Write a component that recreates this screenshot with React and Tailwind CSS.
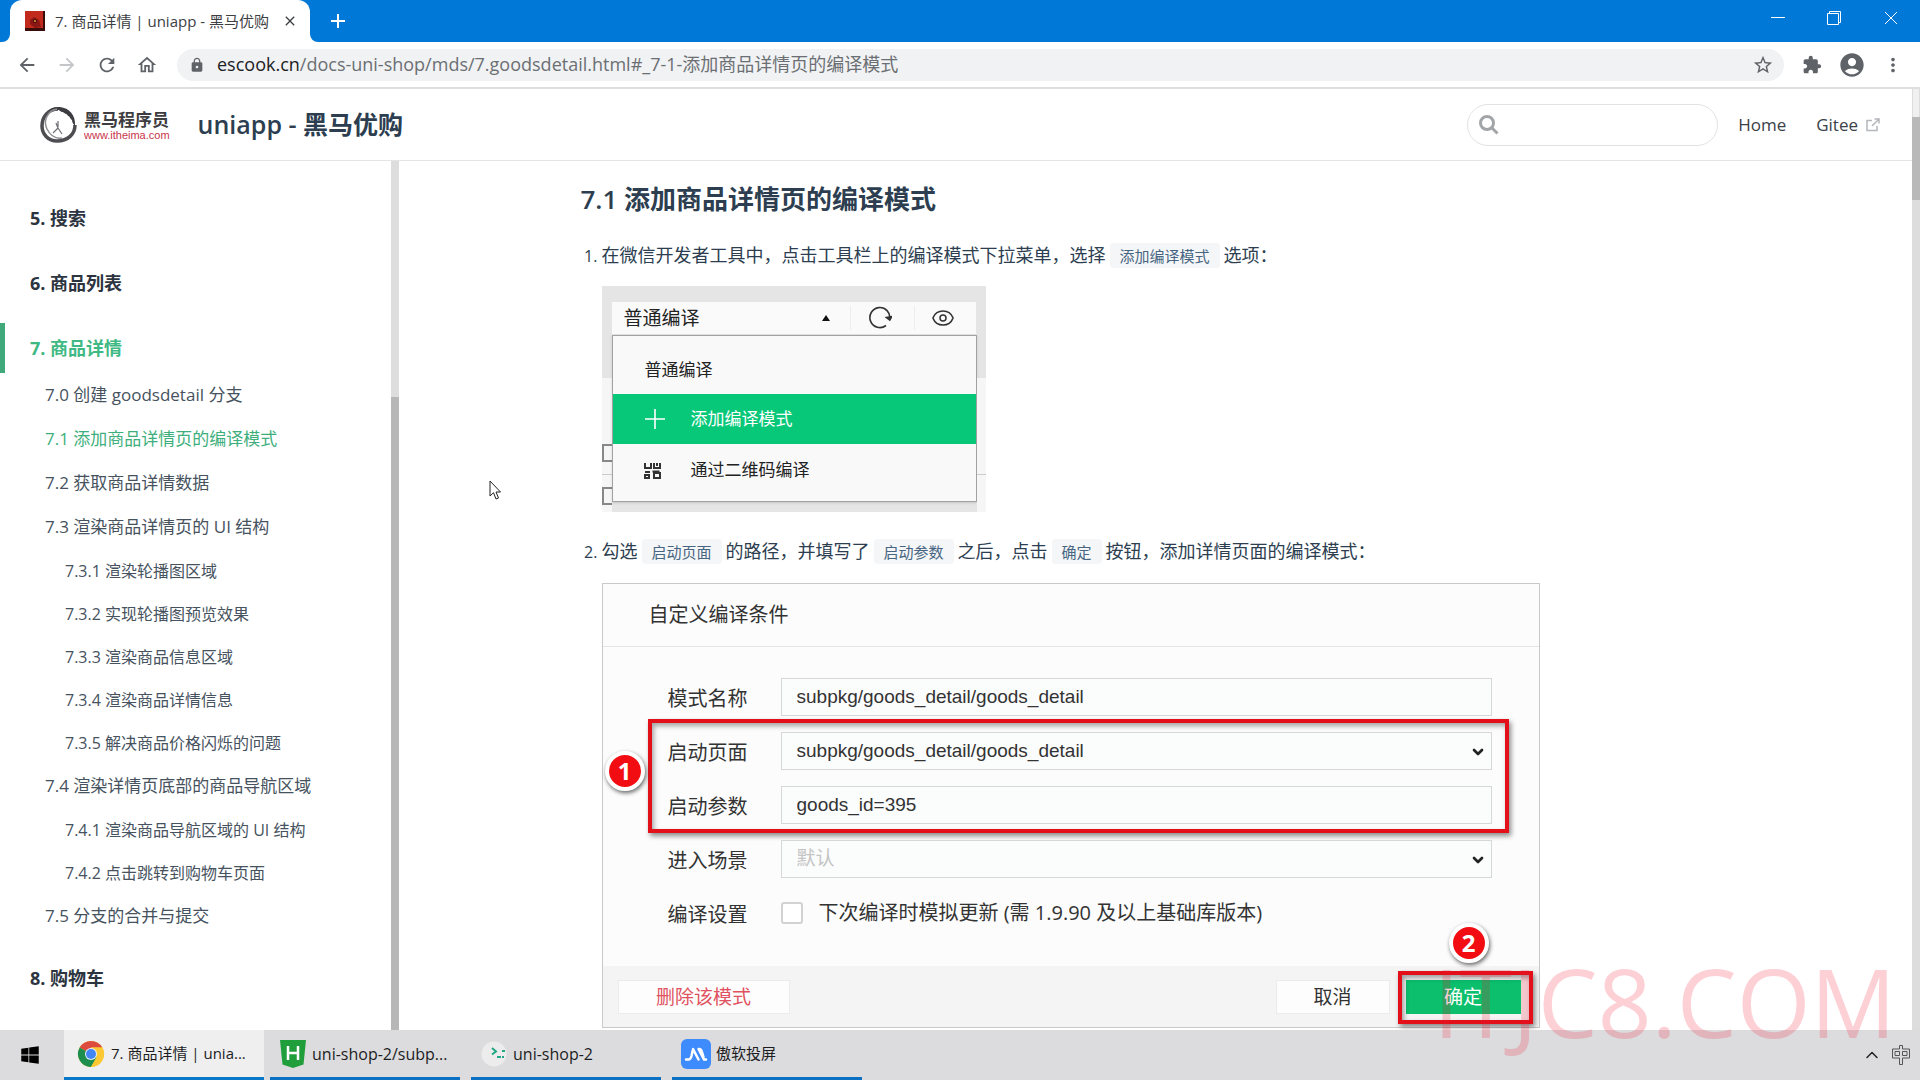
import React, { useState } from "react";
import {
  MdArrowBack,
  MdArrowForward,
  MdRefresh,
  MdOutlineHome,
  MdLock,
  MdStarBorder,
  MdExtension,
  MdAccountCircle,
  MdMoreVert,
  MdClose,
  MdAdd,
} from "react-icons/md";
import { FaWindows } from "react-icons/fa";
import { ChevronDown, ChevronUp, Eye } from "lucide-react";

const sidebar = [
  { title: "5. 搜索" },
  { title: "6. 商品列表" },
  {
    title: "7. 商品详情",
    active: true,
    children: [
      { title: "7.0 创建 goodsdetail 分支" },
      { title: "7.1 添加商品详情页的编译模式", active: true },
      { title: "7.2 获取商品详情数据" },
      {
        title: "7.3 渲染商品详情页的 UI 结构",
        children: [
          "7.3.1 渲染轮播图区域",
          "7.3.2 实现轮播图预览效果",
          "7.3.3 渲染商品信息区域",
          "7.3.4 渲染商品详情信息",
          "7.3.5 解决商品价格闪烁的问题",
        ],
      },
      {
        title: "7.4 渲染详情页底部的商品导航区域",
        children: ["7.4.1 渲染商品导航区域的 UI 结构", "7.4.2 点击跳转到购物车页面"],
      },
      { title: "7.5 分支的合并与提交" },
    ],
  },
  { title: "8. 购物车" },
];

const TabBar = () => (
  <div className="flex h-[42px] shrink-0 justify-between bg-[#0078d7] pl-[10px]">
    <div className="flex">
      <div className="relative flex w-[300px] items-center rounded-t-xl bg-white pl-[15px]">
        <svg viewBox="0 0 20 20" className="h-5 w-5 shrink-0">
          <rect width="20" height="20" fill="#3a0d0b" />
          <rect width="18" height="17" fill="#c12a1c" />
          <path d="M5 9l4-3 5 3 2 7-6 1-5-4z" fill="#8a1712" />
          <circle cx="10" cy="10" r="2" fill="#4a0d0b" />
          <circle cx="10" cy="10" r="1" fill="#e9a13b" />
        </svg>
        <span className="ml-[10px] whitespace-nowrap text-[15px] text-[#3c4043]">
          7. 商品详情 | uniapp - 黑马优购
        </span>
        <button aria-label="关闭标签页" className="absolute right-3">
          <MdClose className="h-4 w-4 text-[#3c4043]" />
        </button>
        <svg viewBox="0 0 8 8" className="absolute bottom-0 -left-2 h-2 w-2">
          <path d="M8 0v8H0a8 8 0 0 0 8-8z" fill="#fff" />
        </svg>
        <svg viewBox="0 0 8 8" className="absolute -right-2 bottom-0 h-2 w-2">
          <path d="M0 0v8h8a8 8 0 0 1-8-8z" fill="#fff" />
        </svg>
      </div>
      <button aria-label="新标签页" className="ml-4 flex items-center text-white">
        <MdAdd className="h-6 w-6" />
      </button>
    </div>
    <div className="flex h-9 items-center text-white">
      <button aria-label="最小化" className="flex w-14 justify-center">
        <svg viewBox="0 0 14 14" className="h-[14px] w-[14px]" stroke="currentColor">
          <path d="M0 6.5h14" />
        </svg>
      </button>
      <button aria-label="还原" className="flex w-14 justify-center">
        <svg viewBox="0 0 14 14" className="h-[14px] w-[14px]" stroke="currentColor" fill="none">
          <path d="M.5 2.500h11v11H.5zM2.500 2.500v-2h11v11h-2" />
        </svg>
      </button>
      <button aria-label="关闭" className="flex w-[58px] justify-center">
        <svg viewBox="0 0 14 14" className="h-[14px] w-[14px]" stroke="currentColor">
          <path d="M1 1l12 12M13 1L1 13" />
        </svg>
      </button>
    </div>
  </div>
);

const Toolbar = () => (
  <div className="flex h-[47px] shrink-0 items-center border-b-2 border-[#dedee1] bg-white pr-4 pl-4 text-[#5f6368]">
    <button aria-label="后退">
      <MdArrowBack className="h-[22px] w-[22px]" />
    </button>
    <button aria-label="前进" className="ml-[18px]">
      <MdArrowForward className="h-[22px] w-[22px] text-[#c4c6c9]" />
    </button>
    <button aria-label="重新加载" className="ml-[18px]">
      <MdRefresh className="h-[22px] w-[22px]" />
    </button>
    <button aria-label="主页" className="ml-[18px]">
      <MdOutlineHome className="h-[22px] w-[22px]" />
    </button>
    <div className="ml-[19px] flex h-8 flex-1 items-center rounded-full bg-[#f1f2f3] pr-[10px] pl-3">
      <MdLock className="h-4 w-4 shrink-0" />
      <span className="ml-3 flex-1 whitespace-nowrap text-[18px] text-[#6b6f73]">
        <span className="text-[#202124]">escook.cn</span>
        /docs-uni-shop/mds/7.goodsdetail.html#_7-1-添加商品详情页的编译模式
      </span>
      <button aria-label="收藏">
        <MdStarBorder className="h-[22px] w-[22px]" />
      </button>
    </div>
    <button aria-label="扩展程序" className="ml-[18px]">
      <MdExtension className="h-5 w-5" />
    </button>
    <button aria-label="用户" className="ml-4">
      <MdAccountCircle className="h-7 w-7" />
    </button>
    <button aria-label="更多" className="ml-4">
      <MdMoreVert className="h-[22px] w-[22px]" />
    </button>
  </div>
);

const Logo = () => (
  <div className="flex items-center">
    <svg viewBox="0 0 42 40" className="h-10 w-[42px]" fill="none">
      <path d="M20 4C10 4 4 12 4 21c0 8 6 15 15 15 11 0 18-7 18-16" stroke="#4d4d52" strokeWidth="3.500" />
      <path d="M37 21C38 10 31 3 22 2c-5-.5-9 1-12 4 4-2 8-2 10-1 2 0 2 2 5 2 1 2 4 1 5 4 2 0 2 3 4 4 0 2 1 4 3 6z" fill="#3d3d41" />
      <path d="M19 4C9 6 5 16 9 24c3 6 8 10 15 9" stroke="#8e8e93" strokeWidth="1.500" />
      <path d="M18 18l2 5-5 5M20 23l4 6M20 16v6" stroke="#6d6d73" strokeWidth="1.200" />
    </svg>
    <div className="ml-1">
      <p className="text-[17px] leading-[19px] font-bold text-[#3d3d41]">黑马程序员</p>
      <p className="font-['Liberation_Sans',sans-serif] text-[11px] leading-[12px] text-[#c9344a]">
        www.itheima.com
      </p>
    </div>
  </div>
);

const SiteHeader = () => (
  <header className="flex h-[72px] shrink-0 items-center justify-between border-b border-[#e3e5e8] pt-px pr-8 pl-[38px]">
    <div className="flex items-center">
      <Logo />
      <a href="#home" className="ml-7 text-[25px] font-semibold text-[#2c3e50]">
        uniapp - 黑马优购
      </a>
    </div>
    <nav className="flex items-center text-[17px] font-medium text-[#3a4149]">
      <div className="relative">
        <svg viewBox="0 0 20 20" className="absolute top-[11px] left-3 h-5 w-5" fill="none" stroke="#a2a5a8" strokeWidth="3">
          <circle cx="8" cy="8" r="6.500" />
          <path d="M12.500 12.500l6 6" />
        </svg>
        <input
          type="text"
          aria-label="搜索"
          className="h-[42px] w-[251px] rounded-full border border-[#e0e3e6] bg-white pr-4 pl-10 outline-none"
        />
      </div>
      <a href="#home" className="ml-5">
        Home
      </a>
      <a href="#gitee" className="ml-[30px] flex items-center">
        Gitee
        <svg viewBox="0 0 14 14" className="ml-2 h-[14px] w-[14px]" fill="none" stroke="#b4b7ba" strokeWidth="1.500">
          <path d="M6 2.500H1v10h10V8M8.500 1h4.500v4.500M13 1L6 8" />
        </svg>
      </a>
    </nav>
  </header>
);

const Sidebar = () => (
  <aside className="flex w-[399px] shrink-0">
    <ul className="min-w-0 flex-1 space-y-[15px] overflow-hidden pt-8 text-[17px] text-[#46525e]">
      {sidebar.map((group) => (
        <li key={group.title}>
          <a
            href="#group"
            className={
              group.active
                ? "flex h-[50px] items-center border-l-[5px] border-[#3fa97c] pl-[25px] text-[18px] font-bold text-[#3fb984]"
                : "flex h-[50px] items-center border-l-[5px] border-transparent pl-[25px] text-[18px] font-bold text-[#2c3440]"
            }
          >
            {group.title}
          </a>
          {group.children && (
            <ul>
              {group.children.map((item) => (
                <li key={item.title}>
                  <a
                    href="#section"
                    className={
                      item.active
                        ? "flex h-11 items-center pl-[45px] text-[#3eaf7c]"
                        : "flex h-11 items-center pl-[45px]"
                    }
                  >
                    {item.title}
                  </a>
                  {item.children && (
                    <ul>
                      {item.children.map((sub) => (
                        <li key={sub}>
                          <a href="#sub" className="flex h-[43px] items-center pl-[65px] text-[16px]">
                            {sub}
                          </a>
                        </li>
                      ))}
                    </ul>
                  )}
                </li>
              ))}
            </ul>
          )}
        </li>
      ))}
    </ul>
    {/* scrollbar */}
    <div className="flex w-2 flex-col bg-[#dddddd]">
      <div className="h-[236px]" />
      <div className="flex-1 bg-[#b7b7b7]" />
    </div>
  </aside>
);

const Code = ({ children }) => (
  <code className="mx-1 rounded bg-[#f4f6f7] px-[10px] py-[2px] font-['Noto_Sans_CJK_SC',sans-serif] text-[15px] leading-none text-[#476582]">
    {children}
  </code>
);

const CompileMenu = () => (
  <div className="mt-[17px] flex h-[226px] w-[384px] flex-col bg-[#e5e5e5] pt-4 text-[17px] text-[#222]">
    <div className="mx-[10px] flex h-8 items-center bg-[#fafafa] pr-[21px] pl-3">
      <span className="flex-1 text-[19px]">普通编译</span>
      <svg viewBox="0 0 8 6" className="h-[6px] w-2">
        <path d="M4 0l4 6H0z" fill="#111" />
      </svg>
      <span className="ml-[20px] h-6 w-px bg-[#eeeeee]" />
      <svg viewBox="0 0 24 24" className="ml-[17px] h-6 w-6" fill="none" stroke="#333" strokeWidth="1.600">
        <path d="M18 19.500A10 10 0 1 1 21.800 13" />
        <path d="M18.500 11.500l3.300 2.500 2-3.500z" fill="#333" />
      </svg>
      <span className="ml-[22px] h-6 w-px bg-[#eeeeee]" />
      <Eye className="ml-[16px] h-6 w-6 text-[#333]" strokeWidth={1.500} />
    </div>
    <div className="flex flex-1">
      <div className="flex w-[10px] flex-col">
        <div className="h-11" />
        <div className="flex flex-1 flex-col bg-[#f6f6f6] pt-[66px]">
          <span className="h-[18px] border-2 border-r-0 border-[#888]" />
          <span className="mt-3 h-px bg-[#ccc]" />
          <span className="mt-3 h-[18px] border-2 border-r-0 border-[#888]" />
        </div>
      </div>
      <ul className="mt-px mb-[10px] flex flex-1 flex-col border border-[#a2a2a2] bg-[#f9f9f9] shadow">
        <li className="flex h-[58px] items-center pt-[10px] pl-8">普通编译</li>
        <li className="flex h-[50px] items-center bg-[#07c878] pl-8 text-white">
          <svg viewBox="0 0 20 20" className="h-5 w-5" stroke="currentColor" strokeWidth="1.600">
            <path d="M10 0v20M0 10h20" />
          </svg>
          <span className="ml-[26px]">添加编译模式</span>
        </li>
        <li className="flex h-[52px] items-center pl-[31px]">
          <svg viewBox="0 0 17 17" className="h-[17px] w-[17px]" fill="none" stroke="#333" strokeWidth="2">
            <path d="M1 1v5h6V1M10 1v5h6V1M13 1v3M1 10h5M1 13h4v3H1zM10 11h6v5h-6zM8.500 9.500h7" />
          </svg>
          <span className="ml-[30px]">通过二维码编译</span>
        </li>
      </ul>
      <div className="flex w-[9px] flex-col">
        <div className="h-11" />
        <div className="flex flex-1 flex-col bg-[#f6f6f6] pt-[96px]">
          <span className="h-px bg-[#ccc]" />
        </div>
      </div>
    </div>
  </div>
);

const Badge = ({ children }) => (
  <span className="flex h-10 w-10 items-center justify-center rounded-full border-4 border-white bg-[#f20d12] font-['Noto_Sans',sans-serif] text-[24px] leading-none font-bold text-white shadow-[1px_2px_4px_rgba(0,0,0,0.6)]">
    {children}
  </span>
);

const Row = ({ id, label, children }) => (
  <div className="flex h-[54px] items-center">
    <label htmlFor={id} className="w-[113px] shrink-0 pt-1 text-[20px]">
      {label}
    </label>
    {children}
  </div>
);

const fieldClass =
  "h-[38px] w-full appearance-none border border-[#d6d8d8] bg-[#fbfcfc] px-[15px] font-['Liberation_Sans','Noto_Sans_CJK_SC',sans-serif] text-[19px] outline-none";

const CompileDialog = () => {
  const [name, setName] = useState("subpkg/goods_detail/goods_detail");
  const [params, setParams] = useState("goods_id=395");

  return (
    <div className="mt-[18px] w-[938px] border border-[#c9c9c9] bg-[#fcfcfc] text-[#333]">
      <h3 className="flex h-[63px] items-center border-b border-[#e4e4e4] pl-[46px] text-[20px]">
        自定义编译条件
      </h3>
      <form className="pt-[23px]" onSubmit={(e) => e.preventDefault()}>
        <div className="pr-[47px] pb-[26px] pl-[65px]">
          <Row id="name" label="模式名称">
            <input id="name" className={fieldClass} value={name} onChange={(e) => setName(e.target.value)} />
          </Row>
          <div className="relative">
            <Row id="page" label="启动页面">
              <div className="relative flex-1">
                <select id="page" className={fieldClass}>
                  <option>subpkg/goods_detail/goods_detail</option>
                </select>
                <ChevronDown className="pointer-events-none absolute top-3 right-[6px] h-4 w-4 text-[#222]" strokeWidth={4} />
              </div>
            </Row>
            <Row id="params" label="启动参数">
              <input id="params" className={fieldClass} value={params} onChange={(e) => setParams(e.target.value)} />
            </Row>
            <div className="pointer-events-none absolute -top-[5px] -right-[17px] -bottom-px -left-[20px] border-4 border-[#e3101a] shadow-[2px_3px_5px_rgba(0,0,0,0.45),inset_2px_3px_5px_rgba(0,0,0,0.35)]" />
            <div className="absolute top-[27px] -left-[63px]">
              <Badge>1</Badge>
            </div>
          </div>
          <Row id="scene" label="进入场景">
            <div className="relative flex-1">
              <select id="scene" className={`${fieldClass} text-[#c4c4c4]`}>
                <option>默认</option>
              </select>
              <ChevronDown className="pointer-events-none absolute top-3 right-[6px] h-4 w-4 text-[#222]" strokeWidth={4} />
            </div>
          </Row>
          <Row id="update" label="编译设置">
            <input
              id="update"
              type="checkbox"
              className="h-[22px] w-[22px] appearance-none rounded-[3px] border-2 border-[#d2d2d2] bg-white"
            />
            <span className="ml-4 text-[20px]">下次编译时模拟更新 (需 1.9.90 及以上基础库版本)</span>
          </Row>
        </div>
        <div className="flex h-[61px] items-center justify-between bg-[#f4f4f4] pr-[18px] pl-[15px] text-[19px]">
          <button type="button" className="h-[34px] w-[172px] border border-[#ebebeb] bg-[#fdfdfd] text-[#e05260]">
            删除该模式
          </button>
          <div className="flex gap-4">
            <button type="button" className="h-[34px] w-[114px] border border-[#ebebeb] bg-[#fdfdfd]">
              取消
            </button>
            <div className="relative">
              <button type="submit" className="h-[34px] w-[115px] bg-[#0bbf6c] text-white">
                确定
              </button>
              <div className="pointer-events-none absolute -top-[9px] -right-3 -bottom-[10px] -left-2 border-4 border-[#e3101a] shadow-[2px_3px_5px_rgba(0,0,0,0.45),inset_2px_3px_5px_rgba(0,0,0,0.35)]" />
              <div className="absolute -top-[57px] left-[43px]">
                <Badge>2</Badge>
              </div>
            </div>
          </div>
        </div>
      </form>
    </div>
  );
};

const Doc = () => (
  <main className="min-w-0 flex-1 overflow-hidden">
    <div className="mx-auto w-full max-w-[1150px] pt-5 text-[18px] leading-7 text-[#2c3e50]">
      <h2 className="text-[26px] leading-9 font-semibold">7.1 添加商品详情页的编译模式</h2>
      <ol className="mt-6 list-decimal pl-[21px] marker:text-[16px]">
        <li>
          <p className="h-7 whitespace-nowrap">
            在微信开发者工具中，点击工具栏上的编译模式下拉菜单，选择<Code>添加编译模式</Code>选项：
          </p>
          <CompileMenu />
        </li>
        <li className="mt-[25px]">
          <p className="h-7 whitespace-nowrap">
            勾选<Code>启动页面</Code>的路径，并填写了<Code>启动参数</Code>之后，点击<Code>确定</Code>
            按钮，添加详情页面的编译模式：
          </p>
          <CompileDialog />
        </li>
      </ol>
    </div>
  </main>
);

const ChromeIcon = () => (
  <svg viewBox="0 0 28 28" className="h-7 w-7">
    <circle cx="14" cy="14" r="13" fill="#fcc934" />
    <path d="M14 14L2.700 7.500A13 13 0 0 1 25.300 7.500H14z" fill="#dd4b3e" />
    <path d="M14 14L2.700 7.500A13 13 0 0 0 14 27l5.600-9.700z" fill="#1e8e4e" />
    <path d="M14 14V7.500h11.300A13 13 0 0 1 14 27l5.600-9.700z" fill="#fcc934" />
    <circle cx="14" cy="14" r="6" fill="#e8effc" />
    <circle cx="14" cy="14" r="5" fill="#4285f4" />
  </svg>
);

const HBuilderIcon = () => (
  <svg viewBox="0 0 28 28" className="h-7 w-7">
    <path d="M1 0h26l-2.500 24.500L14 28 3.500 24.500z" fill="#1f9e3b" />
    <path d="M9 6v14M19 6v14M9 13h10" stroke="#fff" strokeWidth="2.500" fill="none" />
  </svg>
);

const DevToolsIcon = () => (
  <svg viewBox="0 0 28 28" className="h-7 w-7" fill="none">
    <circle cx="14" cy="14" r="12.500" fill="#ececec" />
    <path d="M12 8l4 3.500-4 3" stroke="#22a884" strokeWidth="2" />
    <path d="M17 17h4M23 16v2M22 11h3" stroke="#22a884" strokeWidth="2" />
  </svg>
);

const CastIcon = () => (
  <svg viewBox="0 0 30 30" className="h-[30px] w-[30px]">
    <rect width="30" height="30" rx="6" fill="#3d8bfd" />
    <path
      d="M5 20.500h2.500c2 0 2.500-1.500 3-3.500l1-5M12 10l5.500 10.500M17.500 10L23 20.500h2M18 10c1 0 2.500 1 3 3l1.500 5"
      stroke="#fff"
      strokeWidth="2.500"
      fill="none"
      strokeLinecap="round"
    />
  </svg>
);

const taskItem = "flex h-full w-[190px] items-center gap-[5px] border-b-[3px] border-[#0a70c4] pl-[9px] text-left";

const Taskbar = () => (
  <footer className="flex h-[50px] shrink-0 items-center bg-[#dcdcde] text-[16px] text-[#1d1d1f]">
    <button aria-label="开始" className="flex w-16 justify-center pr-1">
      <FaWindows className="h-5 w-5 text-black" />
    </button>
    <button className="flex h-full w-[200px] items-center gap-[6px] border-b-[3px] border-[#0a78c8] bg-[#efefef] pl-[13px] text-[15px]">
      <ChromeIcon />
      <span>7. 商品详情 | unia...</span>
    </button>
    <button className={`${taskItem} ml-[6px]`}>
      <HBuilderIcon />
      <span>uni-shop-2/subp...</span>
    </button>
    <button className={`${taskItem} ml-[11px]`}>
      <DevToolsIcon />
      <span>uni-shop-2</span>
    </button>
    <button className={`${taskItem} ml-[11px] text-[15px]`}>
      <CastIcon />
      <span>傲软投屏</span>
    </button>
    <div className="ml-auto flex items-center gap-[10px] pr-[10px]">
      <ChevronUp className="h-5 w-5 text-[#222]" strokeWidth={1.800} />
      <svg viewBox="0 0 18 20" className="h-5 w-[18px]" fill="none" stroke="#555">
        <path d="M7.500 0.500h3V4h7v9h-7v6.500h-3V13h-7V4h7zM3 6.500h4.500v4H3zM10.500 6.500H15v4h-4.500z" />
      </svg>
    </div>
  </footer>
);

export default function App() {
  return (
    <div className="relative flex h-screen flex-col overflow-hidden bg-white font-['Open_Sans','Noto_Sans_CJK_SC',sans-serif]">
      <TabBar />
      <Toolbar />
      <div className="flex min-h-0 flex-1">
        <div className="flex min-w-0 flex-1 flex-col">
          <SiteHeader />
          <div className="flex min-h-0 flex-1">
            <Sidebar />
            <Doc />
          </div>
        </div>
        {/* page scrollbar */}
        <div className="w-2 shrink-0 bg-[#dddddd]">
          <div className="h-[28px] border-x border-[#dddddd] bg-[#f0f0f0]" />
          <div className="h-[83px] bg-[#b9b9b9]" />
        </div>
      </div>
      <Taskbar />
      <svg viewBox="0 0 12 20" className="absolute top-[480px] left-[489px] h-5 w-3">
        <path d="M1 1v15l3.500-3.300L7 19l2.500-1-2.500-6h4.500z" fill="#fff" stroke="#222" />
      </svg>
      <span
        aria-hidden="true"
        className="pointer-events-none absolute right-[24px] bottom-[14px] text-[95px] leading-[130px] text-[#f0142f]/20"
      >
        ITJC8.COM
      </span>
    </div>
  );
}
